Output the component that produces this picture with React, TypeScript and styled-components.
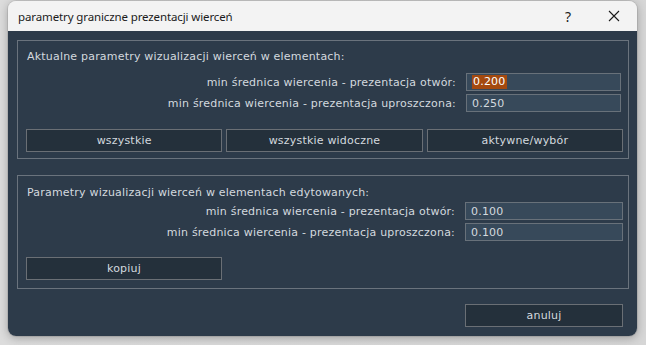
import React from "react";
import styled, { createGlobalStyle } from "styled-components";

const GlobalStyle = createGlobalStyle`
  html, body { margin: 0; padding: 0; background: #d9d9d9; overflow: hidden; }
  #root { width: 646px; height: 345px; }
`;

const Page = styled.div`
  width: 646px;
  height: 345px;
  padding: 1px 0 0 8px;
  box-sizing: border-box;
  background: linear-gradient(90deg, #dcdcdc 0%, #d6d6d6 100%);
`;

const Window = styled.div`
  width: 629px;
  height: 335px;
  border-radius: 8px;
  overflow: hidden;
  display: flex;
  flex-direction: column;
  box-shadow: 0 2px 10px rgba(0, 0, 0, 0.28), 0 0 0 1px rgba(0, 0, 0, 0.08);
`;

const TitleBar = styled.div`
  height: 30px;
  flex: none;
  background: #f3f3f3;
  display: flex;
  align-items: center;
  padding-left: 10px;
`;

const Title = styled.div`
  flex: 1;
  font-family: "Noto Sans", "Open Sans", sans-serif;
  font-size: 11.5px;
  color: #1b1b1b;
  letter-spacing: -0.12px;
`;

const CaptionButton = styled.div`
  width: 46px;
  height: 30px;
  display: flex;
  align-items: center;
  justify-content: center;
  font-family: "Noto Sans", sans-serif;
  font-size: 14px;
  color: #1b1b1b;
`;

const Body = styled.div`
  flex: 1;
  background: #2d3b4a;
  padding: 9px 8px 0 9px;
  display: flex;
  flex-direction: column;
  font-family: "DejaVu Sans", Verdana, sans-serif;
  font-size: 11px;
  letter-spacing: 0.2px;
  color: #d3d9df;
`;

const Group = styled.div<{ $padTop: number; $padBottom: number; $titleGap: number }>`
  border: 1px solid #6a737d;
  padding: ${(p) => p.$padTop}px 5px ${(p) => p.$padBottom}px 8px;
  display: flex;
  flex-direction: column;
  & + & { margin-top: 16px; }
  & > :nth-child(2) { margin-top: ${(p) => p.$titleGap}px; }
`;

const GroupTitle = styled.div`
  height: 17px;
  line-height: 17px;
  padding-left: 1px;
  white-space: nowrap;
`;

const Rows = styled.div`
  display: flex;
  flex-direction: column;
  gap: 3px;
`;

const Row = styled.div<{ $inputWidth: number; $endGap: number }>`
  display: flex;
  justify-content: flex-end;
  align-items: center;
  height: 18px;
  padding-right: ${(p) => p.$endGap}px;
  & > div:last-child { width: ${(p) => p.$inputWidth}px; }
`;

const Label = styled.label`
  white-space: nowrap;
  margin-right: 10px;
`;

const Field = styled.div`
  height: 18px;
  box-sizing: border-box;
  background: #37495a;
  border: 1px solid #68717a;
  display: flex;
  align-items: center;
  padding-left: 5px;
  color: #d3d9df;
`;

const Selected = styled.span`
  background: #a4490f;
  color: #ffffff;
  line-height: 14px;
  padding: 0 1px;
`;

const ButtonRow = styled.div<{ $top: number }>`
  margin-top: ${(p) => p.$top}px;
  display: grid;
  grid-template-columns: repeat(3, 1fr);
  gap: 4px;
`;

const SingleRow = styled.div<{ $top: number }>`
  margin-top: ${(p) => p.$top}px;
  display: flex;
`;

const Button = styled.button<{ $width?: number }>`
  height: 23px;
  ${(p) => (p.$width ? `width: ${p.$width}px;` : "")}
  box-sizing: border-box;
  background: #24303b;
  border: 1px solid #6a6f75;
  color: #d3d9df;
  font-family: "DejaVu Sans", Verdana, sans-serif;
  font-size: 11px;
  letter-spacing: 0.2px;
  padding: 0;
  margin: 0;
`;

const Footer = styled.div`
  margin-top: 15px;
  display: flex;
  justify-content: flex-end;
  padding-right: 6px;
`;

const CloseIcon = () => (
  <svg width="12" height="12" viewBox="0 0 12 12">
    <path d="M1 1 L11 11 M11 1 L1 11" stroke="#1b1b1b" strokeWidth="1.1" fill="none" />
  </svg>
);

export default function App() {
  return (
    <>
      <GlobalStyle />
      <Page>
        <Window>
          <TitleBar>
            <Title>parametry graniczne prezentacji wierceń</Title>
            <CaptionButton>?</CaptionButton>
            <CaptionButton>
              <CloseIcon />
            </CaptionButton>
          </TitleBar>
          <Body>
            <Group $padTop={7} $padBottom={6} $titleGap={8}>
              <GroupTitle>Aktualne parametry wizualizacji wierceń w elementach:</GroupTitle>
              <Rows>
                <Row $inputWidth={155} $endGap={2}>
                  <Label>min średnica wiercenia - prezentacja otwór:</Label>
                  <Field>
                    <Selected>0.200</Selected>
                  </Field>
                </Row>
                <Row $inputWidth={155} $endGap={2}>
                  <Label>min średnica wiercenia - prezentacja uproszczona:</Label>
                  <Field>0.250</Field>
                </Row>
              </Rows>
              <ButtonRow $top={17}>
                <Button>wszystkie</Button>
                <Button>wszystkie widoczne</Button>
                <Button>aktywne/wybór</Button>
              </ButtonRow>
            </Group>
            <Group $padTop={8} $padBottom={8} $titleGap={1}>
              <GroupTitle>Parametry wizualizacji wierceń w elementach edytowanych:</GroupTitle>
              <Rows>
                <Row $inputWidth={158} $endGap={0}>
                  <Label>min średnica wiercenia - prezentacja otwór:</Label>
                  <Field>0.100</Field>
                </Row>
                <Row $inputWidth={158} $endGap={0}>
                  <Label>min średnica wiercenia - prezentacja uproszczona:</Label>
                  <Field>0.100</Field>
                </Row>
              </Rows>
              <SingleRow $top={16}>
                <Button $width={196}>kopiuj</Button>
              </SingleRow>
            </Group>
            <Footer>
              <Button $width={158}>anuluj</Button>
            </Footer>
          </Body>
        </Window>
      </Page>
    </>
  );
}
